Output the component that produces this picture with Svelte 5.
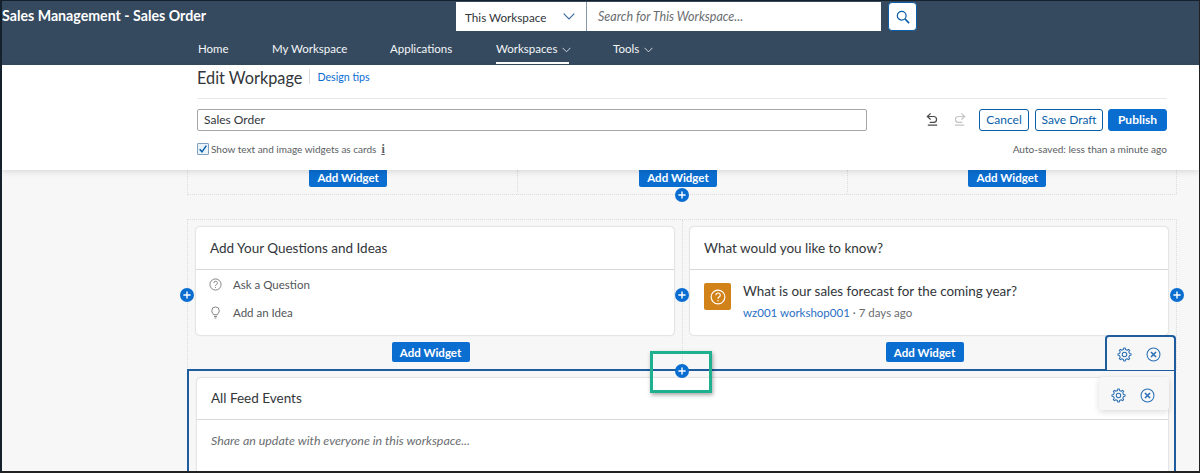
<script>
  const navItems = [
    { label: 'Home', w: 74 },
    { label: 'My Workspace', w: 118 },
    { label: 'Applications', w: 106 },
    { label: 'Workspaces', w: 117, caret: true, active: true },
    { label: 'Tools', w: 60, caret: true }
  ];
  function gearPath(cx, cy, ro, ri, n) {
    let d = '';
    for (let i = 0; i < n; i++) {
      const a = (i / n) * Math.PI * 2;
      const s = Math.PI / n;
      const pts = [
        [ri, a - s * 0.55], [ro, a - s * 0.32], [ro, a + s * 0.32], [ri, a + s * 0.55]
      ];
      for (const [r, t] of pts) {
        d += (d ? 'L' : 'M') + (cx + r * Math.cos(t)).toFixed(2) + ' ' + (cy + r * Math.sin(t)).toFixed(2);
      }
    }
    return d + 'Z';
  }
  const gear = gearPath(8, 8, 7, 5.4, 8);
</script>

{#snippet plus(cls)}
  <span class="plus {cls}">
    <svg viewBox="0 0 14 14" width="14" height="14"><circle cx="7" cy="7" r="7" fill="#0a6ed1" /><path d="M7 3.4v7.2M3.4 7h7.2" stroke="#fff" stroke-width="1.4" /></svg>
  </span>
{/snippet}

{#snippet tools()}
  <svg viewBox="0 0 16 16" width="15" height="15" fill="none" stroke="#2a6fb5" stroke-width="1.1"><path d={gear} stroke-linejoin="round" /><circle cx="8" cy="8" r="2.4" /></svg>
  <svg viewBox="0 0 16 16" width="15" height="15" fill="none" stroke="#2a6fb5" stroke-width="1.1"><circle cx="8" cy="8" r="6.9" /><path d="M5.3 5.3l5.4 5.4M10.7 5.3l-5.4 5.4" stroke-width="1.7" /></svg>
{/snippet}

<div class="frame">
  <header class="shell">
    <div class="top">
      <span class="brand">Sales Management - Sales Order</span>
      <div class="search">
        <div class="scope">
          <span>This Workspace</span>
          <svg viewBox="0 0 12 7" width="12" height="7" fill="none" stroke="#3f6d9e" stroke-width="1.2"><path d="M.7.7 6 6l5.3-5.3" /></svg>
        </div>
        <div class="query">Search for This Workspace...</div>
        <button class="go" aria-label="Search">
          <svg viewBox="0 0 16 16" width="14" height="14" fill="none" stroke="#0a5ea8" stroke-width="1.4"><circle cx="6.5" cy="6.5" r="5" /><path d="M10.2 10.2 15 15" stroke-width="1.8" /></svg>
        </button>
      </div>
    </div>
    <nav class="nav">
      {#each navItems as item}
        <span class="navitem" class:active={item.active} style="width:{item.w}px">
          <span class="navlabel">
            {item.label}
            {#if item.caret}
              <svg viewBox="0 0 10 6" width="9" height="6" fill="none" stroke="#dfe5ec" stroke-width="1"><path d="M.6.6 5 5 9.4.6" /></svg>
            {/if}
          </span>
        </span>
      {/each}
    </nav>
  </header>

  <section class="editor">
    <div class="titlerow">
      <h1>Edit Workpage</h1>
      <a href="#tips">Design tips</a>
    </div>
    <div class="formrow">
      <div class="nameinput">Sales Order</div>
      <div class="actions">
        <svg class="undo" viewBox="0 0 16 16" width="15" height="15" fill="none" stroke="#4b4b4b" stroke-width="1.3"><path d="M6 1.5 2.5 4.8 6 8M2.8 4.8h6.4a3.1 3.1 0 0 1 0 6.2H5M3 14h10" /></svg>
        <svg class="redo" viewBox="0 0 16 16" width="15" height="15" fill="none" stroke="#c4c4c4" stroke-width="1.3"><path d="M10 1.5l3.5 3.3L10 8M13.2 4.8H6.8a3.1 3.1 0 0 0 0 6.2H11M3 14h10" /></svg>
        <button class="ghost cancel">Cancel</button>
        <button class="ghost draft">Save Draft</button>
        <button class="publish">Publish</button>
      </div>
    </div>
    <div class="metarow">
      <label class="check">
        <span class="box"><svg viewBox="0 0 12 12" width="10" height="10" fill="none" stroke="#0a5ea8" stroke-width="1.8"><path d="M2 6.2 4.8 9.4 10 2" /></svg></span>
        Show text and image widgets as cards
        <span class="info">i</span>
      </label>
      <span class="saved">Auto-saved: less than a minute ago</span>
    </div>
  </section>

  <main class="canvas">
    <div class="row three">
      <div class="col"><button class="add">Add Widget</button></div>
      <div class="col"><button class="add">Add Widget</button></div>
      <div class="col"><button class="add">Add Widget</button></div>
      {@render plus('p-bottom')}
    </div>

    <div class="row two">
      <div class="col">
        <article class="card">
          <h2>Add Your Questions and Ideas</h2>
          <ul class="links">
            <li>
              <svg viewBox="0 0 14 14" width="13" height="13" fill="none" stroke="#6a6d70" stroke-width=".9"><circle cx="7" cy="7" r="6" /><path d="M5.2 5.4a1.9 1.9 0 1 1 2.7 1.7c-.6.3-.9.7-.9 1.4" /><path d="M7 9.8v1" /></svg>
              Ask a Question
            </li>
            <li>
              <svg viewBox="0 0 14 14" width="13" height="13" fill="none" stroke="#6a6d70" stroke-width=".9"><path d="M4.9 9.4C4.500 8 3 7.400 3 5a4 4 0 0 1 8 0c0 2.400-1.500 3-1.900 4.400zM5.400 11.300h3.200M6 13h2" /></svg>
              Add an Idea
            </li>
          </ul>
        </article>
        <button class="add">Add Widget</button>
      </div>
      <div class="col">
        <article class="card">
          <h2>What would you like to know?</h2>
          <div class="question">
            <span class="qicon">
              <svg viewBox="0 0 14 14" width="16" height="16" fill="none" stroke="#fff" stroke-width="1"><circle cx="7" cy="7" r="6" /><path d="M5.200 5.400a1.900 1.900 0 1 1 2.700 1.700c-.6.3-.9.7-.9 1.400M7 9.700v1.100" /></svg>
            </span>
            <div>
              <p>What is our sales forecast for the coming year?</p>
              <p class="by"><a href="#u">wz001 workshop001</a> · 7 days ago</p>
            </div>
          </div>
        </article>
        <button class="add">Add Widget</button>
      </div>
      {@render plus('p-left')}
      {@render plus('p-mid')}
      {@render plus('p-right')}
    </div>

    <div class="selected">
      <article class="card feed">
        <h2>All Feed Events</h2>
        <p class="share">Share an update with everyone in this workspace...</p>
      </article>
      <div class="tab">{@render tools()}</div>
      <div class="popup">{@render tools()}</div>
      {@render plus('p-top')}
      <div class="highlight"></div>
    </div>
  </main>
</div>

<style>
  :global(body) {
    margin: 0;
  }
  .frame {
    box-sizing: border-box;
    width: 1200px;
    height: 473px;
    overflow: hidden;
    background: #f7f7f7;
    border-top: 1px solid #14202c;
    border-left: 2px solid #14202c;
    border-right: 1px solid #222;
    border-bottom: 2px solid #222;
    font-family: Lato, "Noto Sans", sans-serif;
    color: #32363a;
    display: flex;
    flex-direction: column;
  }
  .shell {
    height: 64px;
    flex: none;
    background: #354a5f;
    color: #fff;
  }
  .top {
    height: 31px;
    display: flex;
    align-items: center;
  }
  .brand {
    width: 454px;
    flex: none;
    font-size: 14.2px;
    font-weight: 700;
    white-space: nowrap;
    position: relative;
    top: -1px;
  }
  .search {
    display: flex;
    height: 29px;
    align-self: flex-start;
    margin-top: 1px;
    color: #32363a;
    font-size: 12.5px;
  }
  .scope {
    width: 131px;
    box-sizing: border-box;
    background: #fff;
    display: flex;
    align-items: center;
    justify-content: space-between;
    padding: 0 11px 0 9px;
    border-right: 1px solid #8a99a8;
    font-size: 11.7px;
  }
  .query {
    width: 294px;
    box-sizing: border-box;
    background: #fff;
    display: flex;
    align-items: center;
    padding-left: 11px;
    font-style: italic;
    color: #6a6d70;
  }
  .go {
    width: 29px;
    height: 29px;
    margin-left: 7px;
    padding: 0;
    display: flex;
    align-items: center;
    justify-content: center;
    background: #fff;
    border: 1px solid #0a5ea8;
    border-radius: 4px;
  }
  .nav {
    height: 33px;
    display: flex;
    padding-left: 196px;
    font-size: 11.5px;
    font-weight: 400;
    color: #f4f6f8;
  }
  .navitem {
    flex: none;
    padding-top: 10px;
    box-sizing: border-box;
    white-space: nowrap;
  }
  .navlabel {
    display: inline-block;
    height: 20px;
  }
  .navlabel svg {
    margin-left: 2px;
  }
  .active .navlabel {
    border-bottom: 1px solid #fff;
    box-shadow: 0 1px 0 #fff;
    width: 73px;
    overflow: visible;
  }
  .editor {
    flex: none;
    height: 105px;
    background: #fff;
    box-shadow: 0 2px 6px rgba(0, 0, 0, 0.12);
    padding: 0 32px 0 195px;
    box-sizing: border-box;
    position: relative;
    z-index: 2;
  }
  .titlerow {
    height: 33px;
    border-bottom: 1px solid #e8e8e8;
    display: flex;
    align-items: flex-start;
  }
  h1 {
    margin: 0;
    font-size: 16.3px;
    font-weight: 400;
    line-height: 26px;
    padding-right: 7px;
    color: #32363a;
    white-space: nowrap;
  }
  .titlerow a {
    margin-top: 4px;
    padding-left: 7px;
    border-left: 1px solid #d9d9d9;
    height: 15px;
    line-height: 15px;
    font-size: 10.7px;
    color: #0a6ed1;
    text-decoration: none;
  }
  .formrow {
    margin-top: 10px;
    display: flex;
    align-items: flex-start;
    justify-content: space-between;
    height: 22px;
  }
  .nameinput {
    width: 670px;
    height: 22px;
    box-sizing: border-box;
    border: 1px solid #a6a6a6;
    border-radius: 2px;
    padding-left: 6px;
    font-size: 12px;
    line-height: 20px;
    color: #32363a;
  }
  .actions {
    display: flex;
    align-items: center;
  }
  .undo {
    margin: 0 12px 2px 1px;
  }
  .redo {
    margin: 0 12px 2px 0;
  }
  .actions button {
    height: 22px;
    box-sizing: border-box;
    border-radius: 3px;
    font-family: inherit;
    font-size: 12px;
    padding: 0 0 1px;
  }
  .ghost {
    background: #fff;
    border: 1px solid #0a5ea8;
    color: #0a5ea8;
  }
  .cancel {
    width: 50px;
    margin-right: 6px;
  }
  .draft {
    width: 68px;
    margin-right: 5px;
  }
  .publish {
    width: 59px;
    background: #0a6ed1;
    border: 1px solid #0a6ed1;
    color: #fff;
    font-weight: 700;
  }
  .metarow {
    margin-top: 10px;
    display: flex;
    justify-content: space-between;
    align-items: center;
    font-size: 10px;
    color: #5a5e62;
    height: 16px;
  }
  .saved {
    font-size: 10.1px;
  }
  .check {
    display: flex;
    align-items: center;
    gap: 2px;
  }
  .box {
    width: 10px;
    height: 10px;
    border: 1px solid #7f9fc0;
    border-radius: 1px;
    background: #eaf2fa;
    display: flex;
    align-items: center;
    justify-content: center;
  }
  .info {
    margin-left: 3px;
    font-family: "Liberation Serif", serif;
    font-size: 12px;
    font-weight: 700;
    text-decoration: underline;
  }
  .canvas {
    flex: 1;
    min-height: 0;
    margin: 0 22px 0 185px;
  }
  .row {
    display: grid;
    position: relative;
    box-sizing: border-box;
    border: 1px dotted #dcdcdc;
  }
  .three {
    grid-template-columns: repeat(3, 1fr);
    height: 25px;
    border-top: 0;
    margin-bottom: 24px;
  }
  .three .col {
    display: flex;
    justify-content: center;
    align-items: flex-start;
  }
  .col + .col {
    border-left: 1px dotted #dcdcdc;
  }
  .two {
    grid-template-columns: 1fr 1fr;
    height: 151px;
    border-bottom: 0;
  }
  .two .col {
    display: flex;
    flex-direction: column;
    align-items: center;
    padding: 7px 8px 0;
    box-sizing: border-box;
    min-width: 0;
  }
  .two .col + .col {
    padding-left: 7px;
  }
  .add {
    height: 20px;
    width: 78px;
    padding: 0;
    margin-right: 9px;
    background: #0a6ed1;
    color: #fff;
    border: 0;
    border-radius: 2px;
    font-family: inherit;
    font-size: 11.5px;
    font-weight: 700;
  }
  .three .add {
    margin-top: -3px;
  }
  .two .add {
    margin-top: 7px;
  }
  .card {
    background: #fff;
    border-radius: 4px;
    box-shadow: 0 0 2px rgba(0, 0, 0, 0.28);
    box-sizing: border-box;
    align-self: stretch;
  }
  .two .card {
    height: 108px;
  }
  h2 {
    margin: 0;
    height: 43px;
    box-sizing: border-box;
    padding-left: 14px;
    border-bottom: 1px solid #d9d9d9;
    font-size: 13.5px;
    font-weight: 400;
    line-height: 43px;
    color: #32363a;
  }
  .links {
    list-style: none;
    margin: 0;
    padding: 0 0 0 13px;
    font-size: 11.5px;
    color: #515559;
  }
  .links li {
    height: 28px;
    display: flex;
    align-items: center;
    gap: 11px;
  }
  .question {
    display: flex;
    gap: 12px;
    padding: 13px 14px 0;
    font-size: 13.4px;
  }
  .question p {
    margin: 0;
    line-height: 18px;
    margin-top: -1px;
  }
  .question p.by {
    margin-top: 4px;
    font-size: 11.5px;
    color: #6a6d70;
  }
  .by a {
    color: #2a6fc4;
    text-decoration: none;
  }
  .qicon {
    width: 27px;
    height: 27px;
    flex: none;
    background: #d1831a;
    border-radius: 2px;
    display: flex;
    align-items: center;
    justify-content: center;
  }
  .selected {
    position: relative;
    box-sizing: border-box;
    height: 103px;
    margin-top: -1px;
    width: 989px;
    border: 2px solid #1e5c9e;
    border-bottom: 0;
    padding: 7px 6px 0 8px;
  }
  .feed {
    height: 120px;
  }
  .feed h2 {
    height: 42px;
    line-height: 41px;
  }
  .share {
    margin: 13px 0 0 14px;
    font-size: 12.4px;
    font-style: italic;
    color: #6a6d70;
  }
  .tab,
  .popup {
    position: absolute;
    display: flex;
    align-items: center;
    justify-content: center;
    gap: 14px;
    box-sizing: border-box;
  }
  .tab {
    right: -2px;
    top: -36px;
    width: 71px;
    height: 35px;
    padding: 1px 3px 0 0;
    border: 2px solid #1e5c9e;
    border-bottom: 0;
    border-radius: 4px 4px 0 0;
    background: #f7f7f7;
  }
  .popup {
    right: 5px;
    top: 6px;
    width: 70px;
    height: 33px;
    padding: 3px 2px 0 0;
    background: #f7f7f7;
    border-radius: 3px;
    box-shadow: 0 2px 6px rgba(0, 0, 0, 0.14);
  }
  .plus {
    position: absolute;
    width: 14px;
    height: 14px;
    display: block;
    z-index: 3;
  }
  .plus svg {
    display: block;
  }
  .p-bottom {
    left: 487px;
    bottom: -8px;
  }
  .p-left {
    left: -8px;
    top: 68px;
  }
  .p-mid {
    left: 487px;
    top: 68px;
  }
  .p-right {
    right: -8px;
    top: 68px;
  }
  .p-top {
    left: 486px;
    top: -7px;
  }
  .highlight {
    position: absolute;
    left: 461px;
    top: -20px;
    width: 62px;
    height: 42px;
    box-sizing: border-box;
    border: 3px solid #1fb08f;
    box-shadow: 1px 2px 4px rgba(0, 0, 0, 0.35);
    z-index: 4;
  }
</style>
